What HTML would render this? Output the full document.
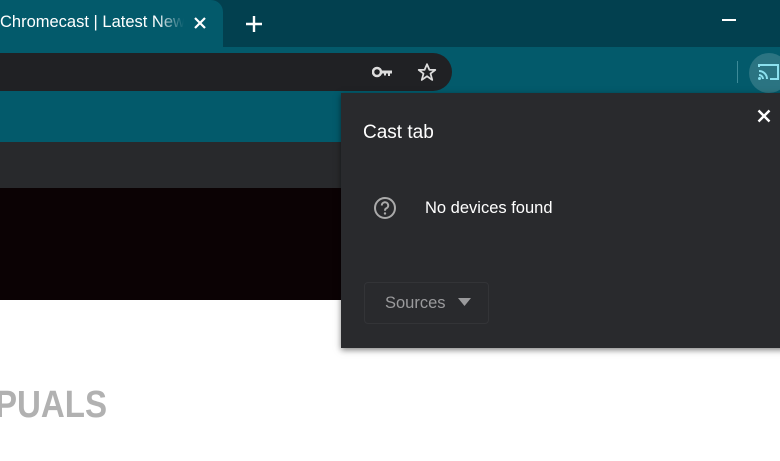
<!DOCTYPE html>
<html><head><meta charset="utf-8"><style>
*{margin:0;padding:0;box-sizing:border-box}
body{width:780px;height:461px;overflow:hidden;background:#fff;position:relative;font-family:"Segoe UI","Liberation Sans",sans-serif}
.a{position:absolute}
</style></head><body>
<div class="a" style="left:0;top:0;width:780px;height:47px;background:#02404f"></div>
<div class="a" style="left:0;top:0;width:223px;height:47px;background:#035a6b;border-top-right-radius:12px"></div>
<div class="a" style="left:0;top:13px;font-size:16.5px;color:#fff;white-space:nowrap;width:184px;overflow:hidden;-webkit-mask-image:linear-gradient(90deg,#000 85%,transparent)">Chromecast | Latest News</div>
<svg class="a" style="left:193px;top:16px" width="14" height="14" viewBox="0 0 14 14"><path d="M2 2L12 12M12 2L2 12" stroke="#fff" stroke-width="2.2"/></svg>
<svg class="a" style="left:245px;top:15px" width="18" height="18" viewBox="0 0 18 18"><path d="M9 1V17M1 9H17" stroke="#fff" stroke-width="2.4"/></svg>
<div class="a" style="left:722px;top:19px;width:14px;height:2px;background:#fff"></div>
<div class="a" style="left:0;top:47px;width:780px;height:46px;background:#035a6b"></div>
<div class="a" style="left:0;top:53px;width:452px;height:38px;background:#202124;border-radius:0 19px 19px 0"></div>
<svg class="a" style="left:372px;top:65px" width="22" height="14" viewBox="0 0 22 14"><circle cx="5" cy="7" r="4" fill="none" stroke="#ddd" stroke-width="2.5"/><path d="M9 5.5H20V8.5H18V11H16V8.5H14V10.5H12V8.5H9Z" fill="#ddd"/></svg>
<svg class="a" style="left:416px;top:62px" width="22" height="21" viewBox="0 0 24 24"><path d="M12 2.5L14.8 9H21.5L16 13.2L18 20.5L12 16.3L6 20.5L8 13.2L2.5 9H9.2Z" fill="none" stroke="#ddd" stroke-width="2" stroke-linejoin="round"/></svg>
<div class="a" style="left:737px;top:61px;width:1px;height:22px;background:#3d8a98"></div>
<div class="a" style="left:749px;top:53px;width:40px;height:40px;border-radius:50%;background:#2b7482"></div>
<svg class="a" style="left:757px;top:62px" width="23" height="20" viewBox="0 0 23 20"><path d="M2 5V3H21V17H13" fill="none" stroke="#8ce0ee" stroke-width="2"/><path d="M2 9A8 8 0 0 1 10 17M2 13A4 4 0 0 1 6 17" fill="none" stroke="#8ce0ee" stroke-width="2"/><circle cx="2.5" cy="16.5" r="1.5" fill="#8ce0ee"/></svg>
<div class="a" style="left:0;top:93px;width:345px;height:49px;background:#035a6b"></div>
<div class="a" style="left:0;top:142px;width:345px;height:46px;background:#28292c"></div>
<div class="a" style="left:0;top:188px;width:345px;height:112px;background:#0b0204"></div>
<div class="a" style="left:-5px;top:384px;font-family:'Liberation Sans',sans-serif;font-weight:bold;font-size:38px;color:#b1b1b1;transform:scaleX(.87);transform-origin:0 0">PUALS</div>
<div class="a" style="left:341px;top:93px;width:445px;height:255px;background:#292a2d;box-shadow:0 2px 6px rgba(0,0,0,.5)"></div>
<div class="a" style="left:363px;top:122px;font-size:19px;color:#fff">Cast tab</div>
<svg class="a" style="left:757px;top:109px" width="14" height="14" viewBox="0 0 14 14"><path d="M1.5 1.5L12.5 12.5M12.5 1.5L1.5 12.5" stroke="#fff" stroke-width="2.4"/></svg>
<svg class="a" style="left:373px;top:196px" width="24" height="24" viewBox="0 0 24 24"><circle cx="12" cy="12" r="10" fill="none" stroke="#aaa" stroke-width="2"/><path d="M8.8 9.5A3.2 3.2 0 1 1 13 12.5C12 13 12 13.6 12 14.8" fill="none" stroke="#aaa" stroke-width="2"/><circle cx="12" cy="17.5" r="1.2" fill="#aaa"/></svg>
<div class="a" style="left:425px;top:199px;font-size:16.5px;color:#fff">No devices found</div>
<div class="a" style="left:364px;top:282px;width:125px;height:42px;border:1px solid #333437;border-radius:4px"></div>
<div class="a" style="left:385px;top:294px;font-size:16.5px;color:#9a9a9c">Sources</div>
<svg class="a" style="left:458px;top:298px" width="13" height="8" viewBox="0 0 13 8"><path d="M0 0H13L6.5 8Z" fill="#9a9a9c"/></svg>
</body></html>
